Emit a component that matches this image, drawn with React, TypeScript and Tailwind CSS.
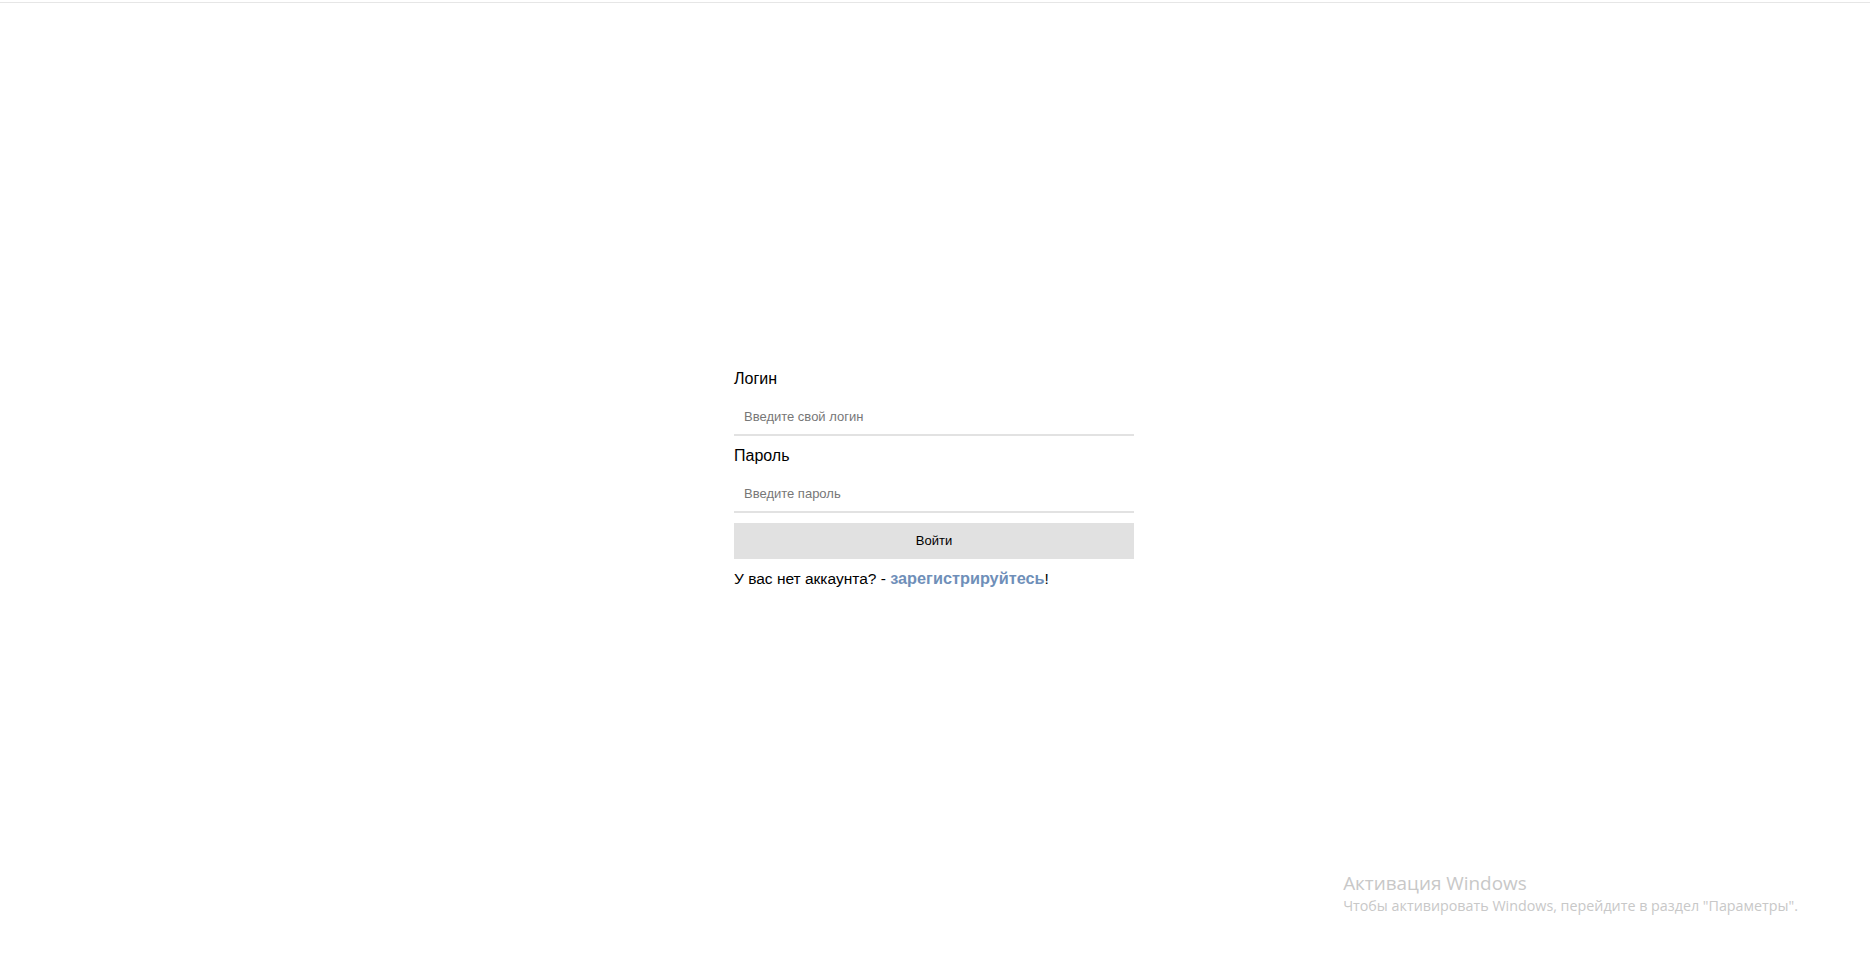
import React, { useState } from 'react';

const App = () => {
    const [login, setLogin] = useState('');
    const [password, setPassword] = useState('');

    return (
        <div className="relative min-h-[966px] w-full bg-white border-t border-[#e6e6e6] mt-[2px]" style={{ fontFamily: '"Liberation Sans", Arial, sans-serif' }}>
            <div className="flex justify-center pt-[367px]">
                <form className="w-[400px] flex flex-col -ml-[2px]" onSubmit={(e) => e.preventDefault()}>
                    <label className="text-[16px] leading-[18px] text-black mb-[10px]">Логин</label>
                    <input
                        type="text"
                        value={login}
                        onChange={(e) => setLogin(e.target.value)}
                        placeholder="Введите свой логин"
                        className="h-[38px] px-[10px] text-[13px] border-b-2 border-[#e2e2e2] outline-none placeholder:text-[#777]"
                    />
                    <label className="text-[16px] leading-[18px] text-black mt-[11px] mb-[10px]">Пароль</label>
                    <input
                        type="password"
                        value={password}
                        onChange={(e) => setPassword(e.target.value)}
                        placeholder="Введите пароль"
                        className="h-[38px] px-[10px] text-[13px] border-b-2 border-[#e2e2e2] outline-none placeholder:text-[#777]"
                    />
                    <button type="submit" className="mt-[10px] h-[36px] bg-[#e1e1e1] text-[13px] text-black">
                        Войти
                    </button>
                    <p className="mt-[9px] text-[15.5px] leading-[20px] text-black">
                        У вас нет аккаунта? - <a href="#" className="font-bold text-[16.3px] text-[#6f8fb9]">зарегистрируйтесь</a>!
                    </p>
                </form>
            </div>

            {/* windows watermark */}
            <div className="absolute right-[72px] top-[868px] text-[#c8c8c8] pointer-events-none" style={{ fontFamily: '"Open Sans", "Noto Sans", sans-serif' }}>
                <div className="text-[18.9px] leading-[25px]">Активация Windows</div>
                <div className="text-[14.3px] leading-[20px]">Чтобы активировать Windows, перейдите в раздел "Параметры".</div>
            </div>
        </div>
    );
};

export default App;
